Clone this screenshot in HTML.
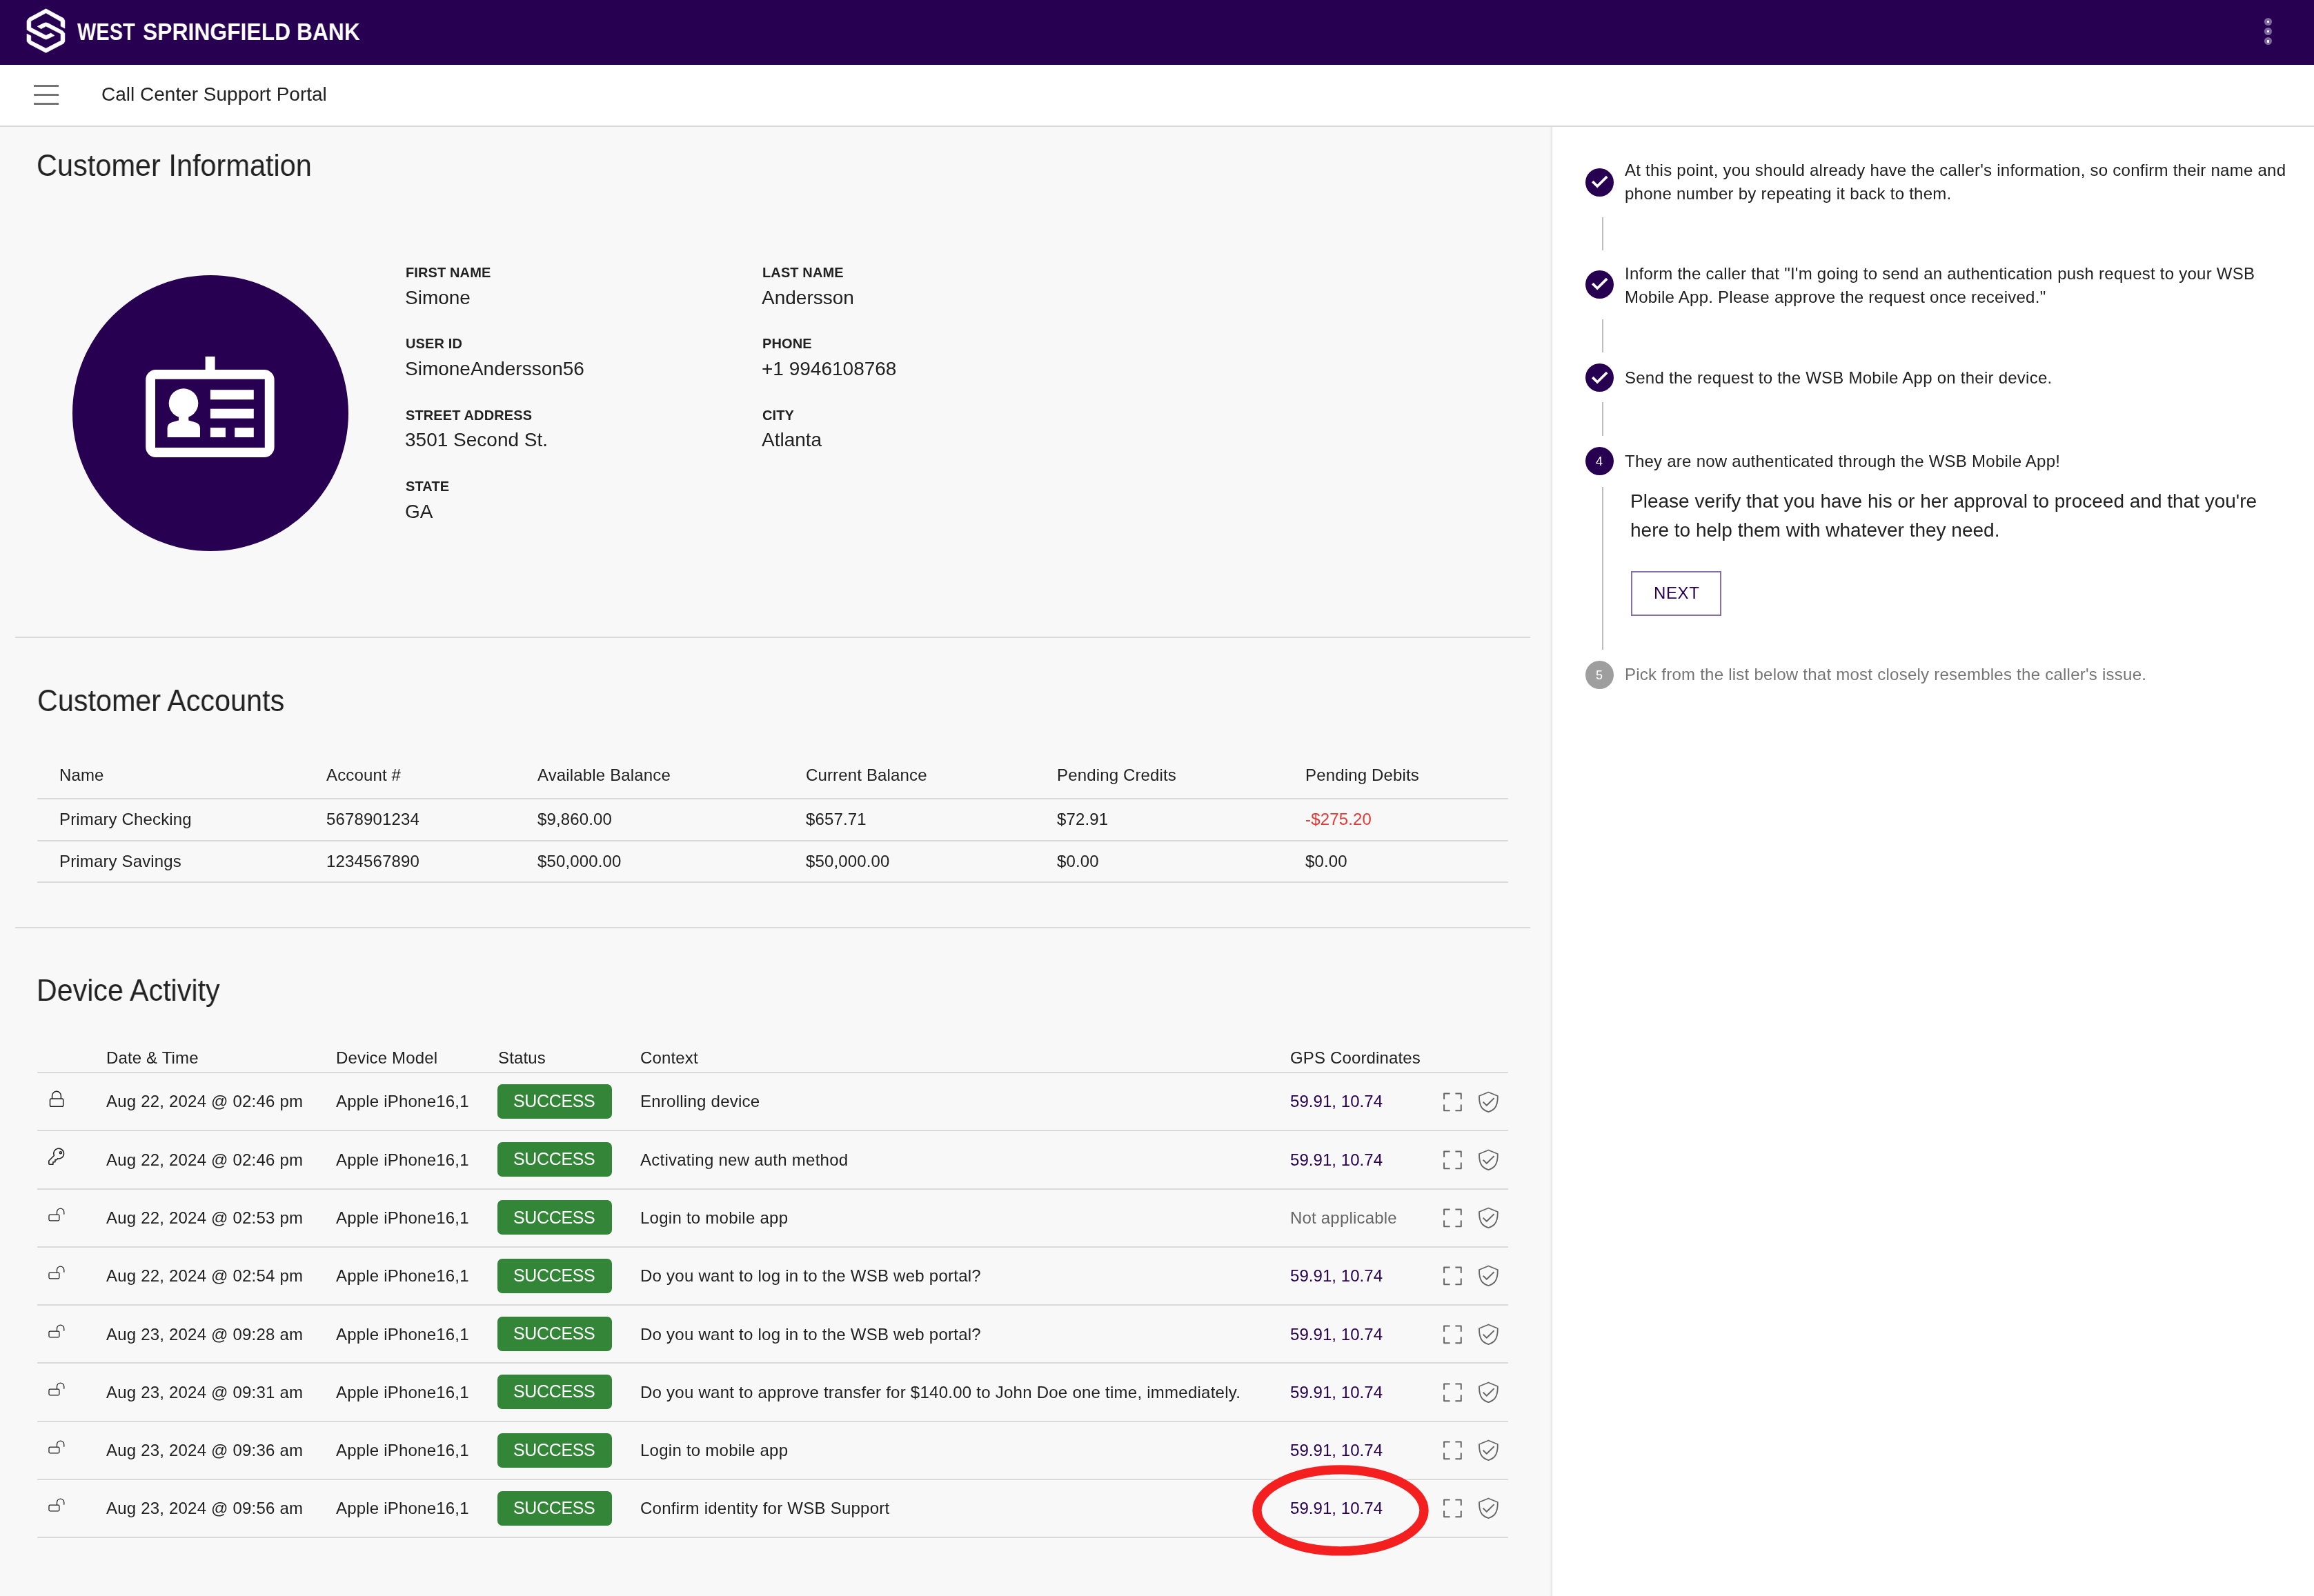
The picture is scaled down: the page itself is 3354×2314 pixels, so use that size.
<!DOCTYPE html>
<html><head><meta charset="utf-8"><title>West Springfield Bank - Call Center Support Portal</title>
<style>
html,body{margin:0;padding:0;}
body{width:3354px;height:2314px;position:relative;overflow:hidden;background:#f8f8f8;font-family:"Liberation Sans",sans-serif;}
.t{position:absolute;white-space:nowrap;will-change:transform;}
.r{position:absolute;}
@media (min-width:1600px) and (max-width:1760px){html{zoom:0.5;}}
</style></head><body>
<div class="r" style="left:0px;top:184px;width:2250px;height:2130px;background:#f8f8f8;"></div>
<div class="r" style="left:2250px;top:184px;width:1104px;height:2130px;background:#ffffff;"></div>
<div class="r" style="left:2245px;top:184px;width:4px;height:2130px;background:linear-gradient(to right, rgba(0,0,0,0), rgba(0,0,0,0.045));"></div>
<div class="r" style="left:2249px;top:184px;width:1px;height:2130px;background:#e0e0e0;"></div>
<div class="r" style="left:0px;top:0px;width:3354px;height:94px;background:#280051;"></div>
<svg class="r" style="left:0;top:0" width="200" height="94" viewBox="0 0 200 94">
<g fill="#fff" stroke="#fff" stroke-width="0.6" stroke-linejoin="round">
<path d="M66.6 12.8 L92.2 26.6 L93.9 30.1 L93.9 41.1 L88.1 38.1 L88.1 31.1 L66.6 18.8 L44.8 30.6 L44.8 40.1 L66.6 51.4 L73.6 48.1 L78.9 51.6 L69.6 56.1 L66.6 57.1 L63.6 56.1 L42.0 45.1 L39.0 43.1 L39.0 30.1 L42.0 26.1 Z"/>
<path d="M54.1 38.3 L59.6 41.8 L66.6 38.1 L88.1 49.1 L88.1 59.1 L66.6 70.2 L44.8 59.1 L44.8 51.9 L39.0 49.1 L39.0 60.1 L42.0 63.6 L66.6 76.4 L92.2 63.1 L93.9 60.1 L93.9 48.6 L91.2 45.1 L69.6 33.6 L66.6 32.8 L63.6 33.6 Z"/>
</g></svg>
<div class="t" style="left:112.4px;top:28.3px;font-size:35px;line-height:35px;color:#fff;font-weight:700;transform:scaleX(0.828);transform-origin:0 0">WEST</div>
<div class="t" style="left:206.5px;top:28.3px;font-size:35px;line-height:35px;color:#fff;font-weight:700;transform:scaleX(0.91);transform-origin:0 0">SPRINGFIELD</div>
<div class="t" style="left:429.9px;top:28.3px;font-size:35px;line-height:35px;color:#fff;font-weight:700;transform:scaleX(0.909);transform-origin:0 0">BANK</div>
<div class="r" style="left:3282.0px;top:25.700000000000003px;width:11.2px;height:11.2px;border-radius:50%;background:#7d68a0"></div>
<div class="r" style="left:3285.7999999999997px;top:29.5px;width:3.6px;height:3.6px;border-radius:30%;background:#fff"></div>
<div class="r" style="left:3282.0px;top:40.0px;width:11.2px;height:11.2px;border-radius:50%;background:#7d68a0"></div>
<div class="r" style="left:3285.7999999999997px;top:43.800000000000004px;width:3.6px;height:3.6px;border-radius:30%;background:#fff"></div>
<div class="r" style="left:3282.0px;top:54.199999999999996px;width:11.2px;height:11.2px;border-radius:50%;background:#7d68a0"></div>
<div class="r" style="left:3285.7999999999997px;top:58.0px;width:3.6px;height:3.6px;border-radius:30%;background:#fff"></div>
<div class="r" style="left:0px;top:94px;width:3354px;height:88px;background:#ffffff;"></div>
<div class="r" style="left:0px;top:182px;width:3354px;height:2px;background:#d8d8d8;"></div>
<div class="r" style="left:48.6px;top:123.0px;width:36px;height:2.8px;background:#757575;"></div>
<div class="r" style="left:48.6px;top:136.1px;width:36px;height:2.8px;background:#757575;"></div>
<div class="r" style="left:48.6px;top:149.0px;width:36px;height:2.8px;background:#757575;"></div>
<div class="t" style="left:146.5px;top:123.0px;font-size:28px;line-height:28px;color:#212121;font-weight:400;letter-spacing:0px;">Call Center Support Portal</div>
<div class="t" style="left:53.4px;top:218.3px;font-size:44px;line-height:44px;color:#212121;font-weight:400;letter-spacing:0px;transform:scaleX(0.943);transform-origin:0 0;">Customer Information</div>
<div class="r" style="left:104.5px;top:399.3px;width:400px;height:400px;border-radius:50%;background:#280051"></div>
<svg class="r" style="left:0;top:0" width="520" height="820" viewBox="0 0 520 820">
<path fill="#fff" fill-rule="evenodd" d="M225.9 536 H382.9 A14.7 14.7 0 0 1 397.6 550.7 V648.3 A14.7 14.7 0 0 1 382.9 663 H225.9 A14.7 14.7 0 0 1 211.2 648.3 V550.7 A14.7 14.7 0 0 1 225.9 536 Z M225 549.8 V648.9 H383.8 V549.8 Z"/>
<rect x="297.6" y="516.9" width="14" height="20" fill="#fff"/>
<circle cx="266" cy="584.6" r="21.3" fill="#fff"/>
<rect x="259" y="600" width="14.3" height="12" fill="#fff"/>
<path d="M242.6 634 V621 Q242.6 614 250 612 L259 609.5 H273.3 L282 612 Q290 614 290 621 V634 Z" fill="#fff"/>
<rect x="304.9" y="565.2" width="62.9" height="14.1" fill="#fff"/>
<rect x="304.9" y="592.7" width="62.9" height="13.9" fill="#fff"/>
<rect x="304.9" y="620.1" width="22" height="13.9" fill="#fff"/>
<rect x="340.2" y="620.1" width="27.6" height="13.9" fill="#fff"/>
</svg>
<div class="t" style="left:587.5px;top:384.9px;font-size:20px;line-height:20px;color:#212121;font-weight:700;letter-spacing:0.12px;">FIRST NAME</div>
<div class="t" style="left:587.2px;top:417.8px;font-size:28px;line-height:28px;color:#212121;font-weight:400;letter-spacing:0px;">Simone</div>
<div class="t" style="left:1104.5px;top:384.9px;font-size:20px;line-height:20px;color:#212121;font-weight:700;letter-spacing:0.12px;">LAST NAME</div>
<div class="t" style="left:1104.2px;top:417.8px;font-size:28px;line-height:28px;color:#212121;font-weight:400;letter-spacing:0px;">Andersson</div>
<div class="t" style="left:587.5px;top:488.2px;font-size:20px;line-height:20px;color:#212121;font-weight:700;letter-spacing:0.12px;">USER ID</div>
<div class="t" style="left:587.2px;top:521.1px;font-size:28px;line-height:28px;color:#212121;font-weight:400;letter-spacing:0px;">SimoneAndersson56</div>
<div class="t" style="left:1104.5px;top:488.2px;font-size:20px;line-height:20px;color:#212121;font-weight:700;letter-spacing:0.12px;">PHONE</div>
<div class="t" style="left:1104.2px;top:521.1px;font-size:28px;line-height:28px;color:#212121;font-weight:400;letter-spacing:0px;">+1 9946108768</div>
<div class="t" style="left:587.5px;top:591.5px;font-size:20px;line-height:20px;color:#212121;font-weight:700;letter-spacing:0.12px;">STREET ADDRESS</div>
<div class="t" style="left:587.2px;top:624.4px;font-size:28px;line-height:28px;color:#212121;font-weight:400;letter-spacing:0px;">3501 Second St.</div>
<div class="t" style="left:1104.5px;top:591.5px;font-size:20px;line-height:20px;color:#212121;font-weight:700;letter-spacing:0.12px;">CITY</div>
<div class="t" style="left:1104.2px;top:624.4px;font-size:28px;line-height:28px;color:#212121;font-weight:400;letter-spacing:0px;">Atlanta</div>
<div class="t" style="left:587.5px;top:694.8px;font-size:20px;line-height:20px;color:#212121;font-weight:700;letter-spacing:0.12px;">STATE</div>
<div class="t" style="left:587.2px;top:727.7px;font-size:28px;line-height:28px;color:#212121;font-weight:400;letter-spacing:0px;">GA</div>
<div class="r" style="left:22px;top:923px;width:2196px;height:2px;background:#dadada;"></div>
<div class="t" style="left:53.8px;top:994.0px;font-size:44px;line-height:44px;color:#212121;font-weight:400;letter-spacing:0px;transform:scaleX(0.939);transform-origin:0 0;">Customer Accounts</div>
<div class="t" style="left:86.2px;top:1111.6px;font-size:24px;line-height:24px;color:#212121;font-weight:400;letter-spacing:0.15px;">Name</div>
<div class="t" style="left:473.2px;top:1111.6px;font-size:24px;line-height:24px;color:#212121;font-weight:400;letter-spacing:0.15px;">Account #</div>
<div class="t" style="left:778.7px;top:1111.6px;font-size:24px;line-height:24px;color:#212121;font-weight:400;letter-spacing:0.15px;">Available Balance</div>
<div class="t" style="left:1167.7px;top:1111.6px;font-size:24px;line-height:24px;color:#212121;font-weight:400;letter-spacing:0.15px;">Current Balance</div>
<div class="t" style="left:1532.2px;top:1111.6px;font-size:24px;line-height:24px;color:#212121;font-weight:400;letter-spacing:0.15px;">Pending Credits</div>
<div class="t" style="left:1892.2px;top:1111.6px;font-size:24px;line-height:24px;color:#212121;font-weight:400;letter-spacing:0.15px;">Pending Debits</div>
<div class="r" style="left:54px;top:1156.5px;width:2132px;height:2px;background:#dadada;"></div>
<div class="t" style="left:86.2px;top:1175.6px;font-size:24px;line-height:24px;color:#212121;font-weight:400;letter-spacing:0.15px;">Primary Checking</div>
<div class="t" style="left:473.2px;top:1175.6px;font-size:24px;line-height:24px;color:#212121;font-weight:400;letter-spacing:0.15px;">5678901234</div>
<div class="t" style="left:778.7px;top:1175.6px;font-size:24px;line-height:24px;color:#212121;font-weight:400;letter-spacing:0.15px;">$9,860.00</div>
<div class="t" style="left:1167.7px;top:1175.6px;font-size:24px;line-height:24px;color:#212121;font-weight:400;letter-spacing:0.15px;">$657.71</div>
<div class="t" style="left:1532.2px;top:1175.6px;font-size:24px;line-height:24px;color:#212121;font-weight:400;letter-spacing:0.15px;">$72.91</div>
<div class="t" style="left:1892.2px;top:1175.6px;font-size:24px;line-height:24px;color:#e53935;font-weight:400;letter-spacing:0.15px;">-$275.20</div>
<div class="r" style="left:54px;top:1218px;width:2132px;height:2px;background:#dadada;"></div>
<div class="t" style="left:86.2px;top:1236.8px;font-size:24px;line-height:24px;color:#212121;font-weight:400;letter-spacing:0.15px;">Primary Savings</div>
<div class="t" style="left:473.2px;top:1236.8px;font-size:24px;line-height:24px;color:#212121;font-weight:400;letter-spacing:0.15px;">1234567890</div>
<div class="t" style="left:778.7px;top:1236.8px;font-size:24px;line-height:24px;color:#212121;font-weight:400;letter-spacing:0.15px;">$50,000.00</div>
<div class="t" style="left:1167.7px;top:1236.8px;font-size:24px;line-height:24px;color:#212121;font-weight:400;letter-spacing:0.15px;">$50,000.00</div>
<div class="t" style="left:1532.2px;top:1236.8px;font-size:24px;line-height:24px;color:#212121;font-weight:400;letter-spacing:0.15px;">$0.00</div>
<div class="t" style="left:1892.2px;top:1236.8px;font-size:24px;line-height:24px;color:#212121;font-weight:400;letter-spacing:0.15px;">$0.00</div>
<div class="r" style="left:54px;top:1278px;width:2132px;height:2px;background:#dadada;"></div>
<div class="r" style="left:22px;top:1343.5px;width:2196px;height:2px;background:#dadada;"></div>
<div class="t" style="left:53.2px;top:1414.0px;font-size:44px;line-height:44px;color:#212121;font-weight:400;letter-spacing:0px;transform:scaleX(0.936);transform-origin:0 0;">Device Activity</div>
<div class="t" style="left:154.2px;top:1521.6px;font-size:24px;line-height:24px;color:#212121;font-weight:400;letter-spacing:0.15px;">Date &amp; Time</div>
<div class="t" style="left:487.2px;top:1521.6px;font-size:24px;line-height:24px;color:#212121;font-weight:400;letter-spacing:0.15px;">Device Model</div>
<div class="t" style="left:721.7px;top:1521.6px;font-size:24px;line-height:24px;color:#212121;font-weight:400;letter-spacing:0.15px;">Status</div>
<div class="t" style="left:927.7px;top:1521.6px;font-size:24px;line-height:24px;color:#212121;font-weight:400;letter-spacing:0.15px;">Context</div>
<div class="t" style="left:1870.2px;top:1521.6px;font-size:24px;line-height:24px;color:#212121;font-weight:400;letter-spacing:0.15px;">GPS Coordinates</div>
<div class="r" style="left:54px;top:1554px;width:2132px;height:2px;background:#dadada;"></div>
<div class="t" style="left:154.2px;top:1585.4px;font-size:24px;line-height:24px;color:#212121;font-weight:400;letter-spacing:0.2px;">Aug 22, 2024 @ 02:46 pm</div>
<div class="t" style="left:487.2px;top:1585.4px;font-size:24px;line-height:24px;color:#212121;font-weight:400;letter-spacing:0.2px;">Apple iPhone16,1</div>
<div class="r" style="left:720.8px;top:1571.9px;width:166px;height:50px;border-radius:7px;background:#338537"></div>
<div class="t" style="left:744.4px;top:1584.0px;font-size:25px;line-height:25px;color:#fff;font-weight:400;letter-spacing:-0.35px;">SUCCESS</div>
<div class="t" style="left:927.7px;top:1585.4px;font-size:24px;line-height:24px;color:#212121;font-weight:400;letter-spacing:0.25px;">Enrolling device</div>
<div class="t" style="left:1870.2px;top:1585.4px;font-size:24px;line-height:24px;color:#280051;font-weight:400;letter-spacing:0.05px;">59.91, 10.74</div>
<svg class="r" style="left:60px;top:1577.5px" width="44" height="40" viewBox="0 0 44 40">
<g fill="none" stroke="#222" stroke-width="1.5"><rect x="12.5" y="15.1" width="19.2" height="11.2" rx="1.8"/><path d="M15.6 15.1 V10.7 A6.4 6.4 0 0 1 28.4 10.7 V15.1"/></g></svg>
<svg class="r" style="left:2085px;top:1577.5px" width="100" height="40" viewBox="0 0 100 40">
<g fill="none" stroke="#666" stroke-width="2" stroke-linejoin="round">
<path d="M8.1 15.7 V7.45 H16.6 M24.4 7.45 H32.76 V15.7 M32.76 23.4 V32.37 H24.4 M16.6 32.37 H8.1 V23.4"/>
<path d="M72.4 5.5 L59 11 Q58.8 23.5 63.5 29 Q67.5 33 72.4 34.1 Q77.3 33 81.3 29 Q86 23.5 85.8 11 Z" stroke-width="1.85"/>
<path d="M64.6 19.6 L69.8 24.8 L80.6 14.1"/>
</g></svg>
<div class="r" style="left:54px;top:1638.4px;width:2132px;height:2px;background:#dadada;"></div>
<div class="t" style="left:154.2px;top:1669.7px;font-size:24px;line-height:24px;color:#212121;font-weight:400;letter-spacing:0.2px;">Aug 22, 2024 @ 02:46 pm</div>
<div class="t" style="left:487.2px;top:1669.7px;font-size:24px;line-height:24px;color:#212121;font-weight:400;letter-spacing:0.2px;">Apple iPhone16,1</div>
<div class="r" style="left:720.8px;top:1656.2px;width:166px;height:50px;border-radius:7px;background:#338537"></div>
<div class="t" style="left:744.4px;top:1668.3px;font-size:25px;line-height:25px;color:#fff;font-weight:400;letter-spacing:-0.35px;">SUCCESS</div>
<div class="t" style="left:927.7px;top:1669.7px;font-size:24px;line-height:24px;color:#212121;font-weight:400;letter-spacing:0.25px;">Activating new auth method</div>
<div class="t" style="left:1870.2px;top:1669.7px;font-size:24px;line-height:24px;color:#280051;font-weight:400;letter-spacing:0.05px;">59.91, 10.74</div>
<svg class="r" style="left:59px;top:1655.8px" width="44" height="40" viewBox="0 0 44 40">
<g fill="none" stroke="#222" stroke-width="1.6" stroke-linejoin="round">
<path d="M19.3 19.5 L11.85 27 V31.2 Q11.85 32.2 12.85 32.2 H17.9 V28.8 H20.9 V25.6 H23.3 L24.5 23.8 A7.4 7.4 0 1 0 19.3 19.5 Z"/>
<circle cx="28.9" cy="15.2" r="1.5"/></g></svg>
<svg class="r" style="left:2085px;top:1661.8px" width="100" height="40" viewBox="0 0 100 40">
<g fill="none" stroke="#666" stroke-width="2" stroke-linejoin="round">
<path d="M8.1 15.7 V7.45 H16.6 M24.4 7.45 H32.76 V15.7 M32.76 23.4 V32.37 H24.4 M16.6 32.37 H8.1 V23.4"/>
<path d="M72.4 5.5 L59 11 Q58.8 23.5 63.5 29 Q67.5 33 72.4 34.1 Q77.3 33 81.3 29 Q86 23.5 85.8 11 Z" stroke-width="1.85"/>
<path d="M64.6 19.6 L69.8 24.8 L80.6 14.1"/>
</g></svg>
<div class="r" style="left:54px;top:1722.67px;width:2132px;height:2px;background:#dadada;"></div>
<div class="t" style="left:154.2px;top:1753.9px;font-size:24px;line-height:24px;color:#212121;font-weight:400;letter-spacing:0.2px;">Aug 22, 2024 @ 02:53 pm</div>
<div class="t" style="left:487.2px;top:1753.9px;font-size:24px;line-height:24px;color:#212121;font-weight:400;letter-spacing:0.2px;">Apple iPhone16,1</div>
<div class="r" style="left:720.8px;top:1740.4px;width:166px;height:50px;border-radius:7px;background:#338537"></div>
<div class="t" style="left:744.4px;top:1752.6px;font-size:25px;line-height:25px;color:#fff;font-weight:400;letter-spacing:-0.35px;">SUCCESS</div>
<div class="t" style="left:927.7px;top:1753.9px;font-size:24px;line-height:24px;color:#212121;font-weight:400;letter-spacing:0.25px;">Login to mobile app</div>
<div class="t" style="left:1870.2px;top:1753.9px;font-size:24px;line-height:24px;color:#666666;font-weight:400;letter-spacing:0.2px;">Not applicable</div>
<svg class="r" style="left:60px;top:1746.0px" width="44" height="40" viewBox="0 0 44 40">
<g fill="none" stroke="#222" stroke-width="1.3"><rect x="11" y="15.2" width="14.9" height="8.6" rx="1.5"/><path d="M22.5 15.2 V11.25 A5.15 5.15 0 0 1 32.8 11.25 V14.8"/></g></svg>
<svg class="r" style="left:2085px;top:1746.0px" width="100" height="40" viewBox="0 0 100 40">
<g fill="none" stroke="#666" stroke-width="2" stroke-linejoin="round">
<path d="M8.1 15.7 V7.45 H16.6 M24.4 7.45 H32.76 V15.7 M32.76 23.4 V32.37 H24.4 M16.6 32.37 H8.1 V23.4"/>
<path d="M72.4 5.5 L59 11 Q58.8 23.5 63.5 29 Q67.5 33 72.4 34.1 Q77.3 33 81.3 29 Q86 23.5 85.8 11 Z" stroke-width="1.85"/>
<path d="M64.6 19.6 L69.8 24.8 L80.6 14.1"/>
</g></svg>
<div class="r" style="left:54px;top:1806.94px;width:2132px;height:2px;background:#dadada;"></div>
<div class="t" style="left:154.2px;top:1838.2px;font-size:24px;line-height:24px;color:#212121;font-weight:400;letter-spacing:0.2px;">Aug 22, 2024 @ 02:54 pm</div>
<div class="t" style="left:487.2px;top:1838.2px;font-size:24px;line-height:24px;color:#212121;font-weight:400;letter-spacing:0.2px;">Apple iPhone16,1</div>
<div class="r" style="left:720.8px;top:1824.7px;width:166px;height:50px;border-radius:7px;background:#338537"></div>
<div class="t" style="left:744.4px;top:1836.9px;font-size:25px;line-height:25px;color:#fff;font-weight:400;letter-spacing:-0.35px;">SUCCESS</div>
<div class="t" style="left:927.7px;top:1838.2px;font-size:24px;line-height:24px;color:#212121;font-weight:400;letter-spacing:0.25px;">Do you want to log in to the WSB web portal?</div>
<div class="t" style="left:1870.2px;top:1838.2px;font-size:24px;line-height:24px;color:#280051;font-weight:400;letter-spacing:0.05px;">59.91, 10.74</div>
<svg class="r" style="left:60px;top:1830.3px" width="44" height="40" viewBox="0 0 44 40">
<g fill="none" stroke="#222" stroke-width="1.3"><rect x="11" y="15.2" width="14.9" height="8.6" rx="1.5"/><path d="M22.5 15.2 V11.25 A5.15 5.15 0 0 1 32.8 11.25 V14.8"/></g></svg>
<svg class="r" style="left:2085px;top:1830.3px" width="100" height="40" viewBox="0 0 100 40">
<g fill="none" stroke="#666" stroke-width="2" stroke-linejoin="round">
<path d="M8.1 15.7 V7.45 H16.6 M24.4 7.45 H32.76 V15.7 M32.76 23.4 V32.37 H24.4 M16.6 32.37 H8.1 V23.4"/>
<path d="M72.4 5.5 L59 11 Q58.8 23.5 63.5 29 Q67.5 33 72.4 34.1 Q77.3 33 81.3 29 Q86 23.5 85.8 11 Z" stroke-width="1.85"/>
<path d="M64.6 19.6 L69.8 24.8 L80.6 14.1"/>
</g></svg>
<div class="r" style="left:54px;top:1891.21px;width:2132px;height:2px;background:#dadada;"></div>
<div class="t" style="left:154.2px;top:1922.5px;font-size:24px;line-height:24px;color:#212121;font-weight:400;letter-spacing:0.2px;">Aug 23, 2024 @ 09:28 am</div>
<div class="t" style="left:487.2px;top:1922.5px;font-size:24px;line-height:24px;color:#212121;font-weight:400;letter-spacing:0.2px;">Apple iPhone16,1</div>
<div class="r" style="left:720.8px;top:1909.0px;width:166px;height:50px;border-radius:7px;background:#338537"></div>
<div class="t" style="left:744.4px;top:1921.1px;font-size:25px;line-height:25px;color:#fff;font-weight:400;letter-spacing:-0.35px;">SUCCESS</div>
<div class="t" style="left:927.7px;top:1922.5px;font-size:24px;line-height:24px;color:#212121;font-weight:400;letter-spacing:0.25px;">Do you want to log in to the WSB web portal?</div>
<div class="t" style="left:1870.2px;top:1922.5px;font-size:24px;line-height:24px;color:#280051;font-weight:400;letter-spacing:0.05px;">59.91, 10.74</div>
<svg class="r" style="left:60px;top:1914.6px" width="44" height="40" viewBox="0 0 44 40">
<g fill="none" stroke="#222" stroke-width="1.3"><rect x="11" y="15.2" width="14.9" height="8.6" rx="1.5"/><path d="M22.5 15.2 V11.25 A5.15 5.15 0 0 1 32.8 11.25 V14.8"/></g></svg>
<svg class="r" style="left:2085px;top:1914.6px" width="100" height="40" viewBox="0 0 100 40">
<g fill="none" stroke="#666" stroke-width="2" stroke-linejoin="round">
<path d="M8.1 15.7 V7.45 H16.6 M24.4 7.45 H32.76 V15.7 M32.76 23.4 V32.37 H24.4 M16.6 32.37 H8.1 V23.4"/>
<path d="M72.4 5.5 L59 11 Q58.8 23.5 63.5 29 Q67.5 33 72.4 34.1 Q77.3 33 81.3 29 Q86 23.5 85.8 11 Z" stroke-width="1.85"/>
<path d="M64.6 19.6 L69.8 24.8 L80.6 14.1"/>
</g></svg>
<div class="r" style="left:54px;top:1975.48px;width:2132px;height:2px;background:#dadada;"></div>
<div class="t" style="left:154.2px;top:2006.7px;font-size:24px;line-height:24px;color:#212121;font-weight:400;letter-spacing:0.2px;">Aug 23, 2024 @ 09:31 am</div>
<div class="t" style="left:487.2px;top:2006.7px;font-size:24px;line-height:24px;color:#212121;font-weight:400;letter-spacing:0.2px;">Apple iPhone16,1</div>
<div class="r" style="left:720.8px;top:1993.2px;width:166px;height:50px;border-radius:7px;background:#338537"></div>
<div class="t" style="left:744.4px;top:2005.4px;font-size:25px;line-height:25px;color:#fff;font-weight:400;letter-spacing:-0.35px;">SUCCESS</div>
<div class="t" style="left:927.7px;top:2006.7px;font-size:24px;line-height:24px;color:#212121;font-weight:400;letter-spacing:0.25px;">Do you want to approve transfer for $140.00 to John Doe one time, immediately.</div>
<div class="t" style="left:1870.2px;top:2006.7px;font-size:24px;line-height:24px;color:#280051;font-weight:400;letter-spacing:0.05px;">59.91, 10.74</div>
<svg class="r" style="left:60px;top:1998.8px" width="44" height="40" viewBox="0 0 44 40">
<g fill="none" stroke="#222" stroke-width="1.3"><rect x="11" y="15.2" width="14.9" height="8.6" rx="1.5"/><path d="M22.5 15.2 V11.25 A5.15 5.15 0 0 1 32.8 11.25 V14.8"/></g></svg>
<svg class="r" style="left:2085px;top:1998.8px" width="100" height="40" viewBox="0 0 100 40">
<g fill="none" stroke="#666" stroke-width="2" stroke-linejoin="round">
<path d="M8.1 15.7 V7.45 H16.6 M24.4 7.45 H32.76 V15.7 M32.76 23.4 V32.37 H24.4 M16.6 32.37 H8.1 V23.4"/>
<path d="M72.4 5.5 L59 11 Q58.8 23.5 63.5 29 Q67.5 33 72.4 34.1 Q77.3 33 81.3 29 Q86 23.5 85.8 11 Z" stroke-width="1.85"/>
<path d="M64.6 19.6 L69.8 24.8 L80.6 14.1"/>
</g></svg>
<div class="r" style="left:54px;top:2059.75px;width:2132px;height:2px;background:#dadada;"></div>
<div class="t" style="left:154.2px;top:2091.0px;font-size:24px;line-height:24px;color:#212121;font-weight:400;letter-spacing:0.2px;">Aug 23, 2024 @ 09:36 am</div>
<div class="t" style="left:487.2px;top:2091.0px;font-size:24px;line-height:24px;color:#212121;font-weight:400;letter-spacing:0.2px;">Apple iPhone16,1</div>
<div class="r" style="left:720.8px;top:2077.5px;width:166px;height:50px;border-radius:7px;background:#338537"></div>
<div class="t" style="left:744.4px;top:2089.7px;font-size:25px;line-height:25px;color:#fff;font-weight:400;letter-spacing:-0.35px;">SUCCESS</div>
<div class="t" style="left:927.7px;top:2091.0px;font-size:24px;line-height:24px;color:#212121;font-weight:400;letter-spacing:0.25px;">Login to mobile app</div>
<div class="t" style="left:1870.2px;top:2091.0px;font-size:24px;line-height:24px;color:#280051;font-weight:400;letter-spacing:0.05px;">59.91, 10.74</div>
<svg class="r" style="left:60px;top:2083.1px" width="44" height="40" viewBox="0 0 44 40">
<g fill="none" stroke="#222" stroke-width="1.3"><rect x="11" y="15.2" width="14.9" height="8.6" rx="1.5"/><path d="M22.5 15.2 V11.25 A5.15 5.15 0 0 1 32.8 11.25 V14.8"/></g></svg>
<svg class="r" style="left:2085px;top:2083.1px" width="100" height="40" viewBox="0 0 100 40">
<g fill="none" stroke="#666" stroke-width="2" stroke-linejoin="round">
<path d="M8.1 15.7 V7.45 H16.6 M24.4 7.45 H32.76 V15.7 M32.76 23.4 V32.37 H24.4 M16.6 32.37 H8.1 V23.4"/>
<path d="M72.4 5.5 L59 11 Q58.8 23.5 63.5 29 Q67.5 33 72.4 34.1 Q77.3 33 81.3 29 Q86 23.5 85.8 11 Z" stroke-width="1.85"/>
<path d="M64.6 19.6 L69.8 24.8 L80.6 14.1"/>
</g></svg>
<div class="r" style="left:54px;top:2144.02px;width:2132px;height:2px;background:#dadada;"></div>
<div class="t" style="left:154.2px;top:2175.3px;font-size:24px;line-height:24px;color:#212121;font-weight:400;letter-spacing:0.2px;">Aug 23, 2024 @ 09:56 am</div>
<div class="t" style="left:487.2px;top:2175.3px;font-size:24px;line-height:24px;color:#212121;font-weight:400;letter-spacing:0.2px;">Apple iPhone16,1</div>
<div class="r" style="left:720.8px;top:2161.8px;width:166px;height:50px;border-radius:7px;background:#338537"></div>
<div class="t" style="left:744.4px;top:2173.9px;font-size:25px;line-height:25px;color:#fff;font-weight:400;letter-spacing:-0.35px;">SUCCESS</div>
<div class="t" style="left:927.7px;top:2175.3px;font-size:24px;line-height:24px;color:#212121;font-weight:400;letter-spacing:0.25px;">Confirm identity for WSB Support</div>
<div class="t" style="left:1870.2px;top:2175.3px;font-size:24px;line-height:24px;color:#280051;font-weight:400;letter-spacing:0.05px;">59.91, 10.74</div>
<svg class="r" style="left:60px;top:2167.4px" width="44" height="40" viewBox="0 0 44 40">
<g fill="none" stroke="#222" stroke-width="1.3"><rect x="11" y="15.2" width="14.9" height="8.6" rx="1.5"/><path d="M22.5 15.2 V11.25 A5.15 5.15 0 0 1 32.8 11.25 V14.8"/></g></svg>
<svg class="r" style="left:2085px;top:2167.4px" width="100" height="40" viewBox="0 0 100 40">
<g fill="none" stroke="#666" stroke-width="2" stroke-linejoin="round">
<path d="M8.1 15.7 V7.45 H16.6 M24.4 7.45 H32.76 V15.7 M32.76 23.4 V32.37 H24.4 M16.6 32.37 H8.1 V23.4"/>
<path d="M72.4 5.5 L59 11 Q58.8 23.5 63.5 29 Q67.5 33 72.4 34.1 Q77.3 33 81.3 29 Q86 23.5 85.8 11 Z" stroke-width="1.85"/>
<path d="M64.6 19.6 L69.8 24.8 L80.6 14.1"/>
</g></svg>
<div class="r" style="left:54px;top:2228.29px;width:2132px;height:2px;background:#dadada;"></div>
<svg class="r" style="left:1800px;top:2110px" width="300" height="160" viewBox="0 0 300 160"><ellipse cx="143" cy="79.9" rx="121" ry="59" fill="none" stroke="#f41f1f" stroke-width="13.4"/></svg>
<div class="r" style="left:2298.1px;top:244.0px;width:40.8px;height:40.8px;border-radius:50%;background:#280051"></div>
<svg class="r" style="left:2298px;top:244.4px" width="41" height="40" viewBox="0 0 41 40"><path d="M10.3 19.1 L17.2 26 L31.2 12.1" fill="none" stroke="#fff" stroke-width="3.7"/></svg>
<div class="r" style="left:2298.1px;top:392.0px;width:40.8px;height:40.8px;border-radius:50%;background:#280051"></div>
<svg class="r" style="left:2298px;top:392.4px" width="41" height="40" viewBox="0 0 41 40"><path d="M10.3 19.1 L17.2 26 L31.2 12.1" fill="none" stroke="#fff" stroke-width="3.7"/></svg>
<div class="r" style="left:2298.1px;top:527.1px;width:40.8px;height:40.8px;border-radius:50%;background:#280051"></div>
<svg class="r" style="left:2298px;top:527.5px" width="41" height="40" viewBox="0 0 41 40"><path d="M10.3 19.1 L17.2 26 L31.2 12.1" fill="none" stroke="#fff" stroke-width="3.7"/></svg>
<div class="r" style="left:2298.1px;top:648.1px;width:40.8px;height:40.8px;border-radius:50%;background:#280051"></div>

<div class="t" style="left:2313.2px;top:659.9px;font-size:18px;line-height:18px;color:#fff;font-weight:400;letter-spacing:0px;">4</div>
<div class="r" style="left:2298.1px;top:958.1px;width:40.8px;height:40.8px;border-radius:50%;background:#9e9e9e"></div>

<div class="t" style="left:2313.2px;top:970.0px;font-size:18px;line-height:18px;color:#fff;font-weight:400;letter-spacing:0px;">5</div>
<div class="t" style="left:2355.3px;top:235.4px;font-size:24px;line-height:24px;color:#212121;font-weight:400;letter-spacing:0.25px;">At this point, you should already have the caller's information, so confirm their name and</div>
<div class="t" style="left:2355.3px;top:269.4px;font-size:24px;line-height:24px;color:#212121;font-weight:400;letter-spacing:0.25px;">phone number by repeating it back to them.</div>
<div class="t" style="left:2355.3px;top:384.5px;font-size:24px;line-height:24px;color:#212121;font-weight:400;letter-spacing:0.25px;">Inform the caller that "I'm going to send an authentication push request to your WSB</div>
<div class="t" style="left:2355.3px;top:418.5px;font-size:24px;line-height:24px;color:#212121;font-weight:400;letter-spacing:0.25px;">Mobile App. Please approve the request once received."</div>
<div class="t" style="left:2355.3px;top:536.0px;font-size:24px;line-height:24px;color:#212121;font-weight:400;letter-spacing:0.25px;">Send the request to the WSB Mobile App on their device.</div>
<div class="t" style="left:2355.3px;top:657.1px;font-size:24px;line-height:24px;color:#212121;font-weight:400;letter-spacing:0.25px;">They are now authenticated through the WSB Mobile App!</div>
<div class="t" style="left:2355.3px;top:966.0px;font-size:24px;line-height:24px;color:#757575;font-weight:400;letter-spacing:0.25px;">Pick from the list below that most closely resembles the caller's issue.</div>
<div class="r" style="left:2321.8px;top:315px;width:2px;height:48px;background:#bdbdbd;"></div>
<div class="r" style="left:2321.8px;top:463px;width:2px;height:48px;background:#bdbdbd;"></div>
<div class="r" style="left:2321.8px;top:583px;width:2px;height:49px;background:#bdbdbd;"></div>
<div class="r" style="left:2321.8px;top:706px;width:2px;height:235.5px;background:#bdbdbd;"></div>
<div class="t" style="left:2363.0px;top:713.1px;font-size:28px;line-height:28px;color:#212121;font-weight:400;letter-spacing:0px;">Please verify that you have his or her approval to proceed and that you're</div>
<div class="t" style="left:2363.0px;top:754.6px;font-size:28px;line-height:28px;color:#212121;font-weight:400;letter-spacing:0px;">here to help them with whatever they need.</div>
<div class="r" style="left:2363.5px;top:828px;width:131.3px;height:65.3px;box-sizing:border-box;border:2px solid #8670a8"></div>
<div class="t" style="left:2396.5px;top:848.4px;font-size:24px;line-height:24px;color:#280051;font-weight:400;letter-spacing:0.6px;">NEXT</div>
</body></html>
